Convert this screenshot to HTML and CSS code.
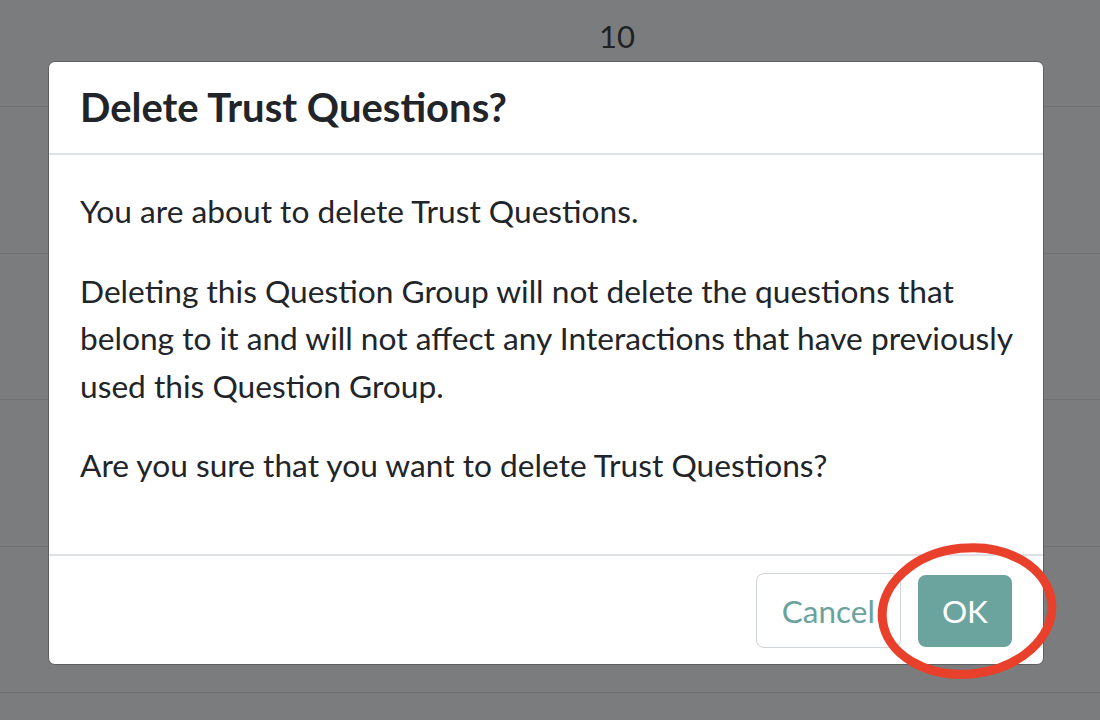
FILE: index.html
```html
<!DOCTYPE html>
<html>
<head>
<meta charset="utf-8">
<link rel="stylesheet" href="styles.css">
</head>
<body>
<div class="page">
  <div class="row first"><span class="num">10</span></div>
  <div class="row"></div>
  <div class="row"></div>
  <div class="row"></div>
  <div class="row"></div>
  <div class="row last"></div>
</div>

<div class="modal">
  <div class="modal-header">
    <h5 class="modal-title">Delete Trust Questions?</h5>
  </div>
  <div class="modal-body">
    <p>You are about to delete Trust Questions.</p>
    <p>Deleting this Question Group will not delete the questions that belong to it and will not affect any Interactions that have previously used this Question Group.</p>
    <p>Are you sure that you want to delete Trust Questions?</p>
  </div>
  <div class="modal-footer">
    <button class="btn btn-cancel">Cancel</button>
    <button class="btn btn-ok">OK</button>
  </div>
</div>

<svg class="circle" width="200" height="160" viewBox="0 0 200 160">
  <ellipse cx="100" cy="80" rx="85" ry="63" fill="none" stroke="#e8402a" stroke-width="9" transform="rotate(-6 100 80)"/>
</svg>
</body>
</html>
```

FILE: styles.css
```css
html, body {
  margin: 0;
  padding: 0;
}
body {
  width: 1100px;
  height: 720px;
  overflow: hidden;
  background: #7b7c7d;
  font-family: Lato, "Open Sans", sans-serif;
  position: relative;
}
.page {
  display: flex;
  flex-direction: column;
  height: 720px;
  overflow: hidden;
}
.row {
  height: 145.5px;
  flex: none;
  border-bottom: 1.5px solid #6f7071;
  box-sizing: content-box;
}
.row.first {
  height: 106px;
  display: flex;
  justify-content: center;
  align-items: flex-start;
  padding-left: 134px;
}
.row.last {
  height: 26px;
  border-bottom: none;
}
.num {
  font-size: 31px;
  color: #1f2224;
  margin-top: 16px;
  line-height: 40px;
}
.modal {
  position: absolute;
  left: 48px;
  top: 61px;
  width: 994px;
  height: 602px;
  background: #fff;
  border: 1px solid #5f6061;
  border-radius: 7px;
  display: flex;
  flex-direction: column;
  color: #212529;
}
.modal-header {
  padding: 20px 32px 21px 31px;
  border-bottom: 2px solid #dfe2e5;
}
.modal-title {
  margin: 0;
  font-size: 40px;
  font-weight: 700;
  line-height: 50px;
  color: #212529;
}
.modal-body {
  flex: 1;
  padding: 33px 30px 0 31px;
}
.modal-body p {
  margin: 0 0 32px;
  font-size: 31.7px;
  line-height: 47.5px;
}
.modal-footer {
  border-top: 2px solid #dfe2e5;
  display: flex;
  justify-content: flex-end;
  align-items: center;
  gap: 17px;
  padding: 17px 31px 16px;
}
.btn {
  font-family: Lato, "Open Sans", sans-serif;
  font-size: 31.5px;
  border-radius: 8px;
  cursor: pointer;
}
.btn-cancel {
  height: 75px;
  padding: 0 25px;
  background: #fff;
  color: #6ba29d;
  border: 1.5px solid #cfd4d8;
}
.btn-ok {
  height: 72px;
  padding: 0 24px;
  background: #6ba39e;
  color: #fff;
  border: none;
}
.circle {
  position: absolute;
  left: 867px;
  top: 531px;
}
```
